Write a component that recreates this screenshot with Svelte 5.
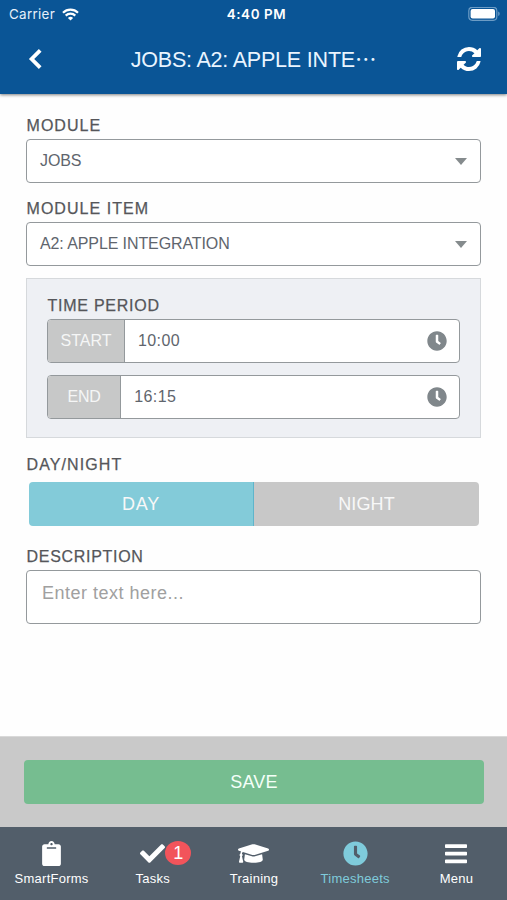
<script>
  const CLOCK =
    "M256 8C119 8 8 119 8 256s111 248 248 248 248-111 248-248S393 8 256 8zm92.49 313l-20 25a16 16 0 0 1-22.49 2.5l-67-49.72a40 40 0 0 1-15-31.23V112a16 16 0 0 1 16-16h32a16 16 0 0 1 16 16v144l58 42.5a16 16 0 0 1 2.49 22.5z";

  const tabs = [
    {
      name: "SmartForms",
      viewBox: "0 0 384 512",
      width: 19,
      height: 25,
      path:
        "M384 112v352c0 26.51-21.49 48-48 48H48c-26.51 0-48-21.49-48-48V112c0-26.51 21.49-48 48-48h80c0-35.29 28.71-64 64-64s64 28.71 64 64h80c26.51 0 48 21.49 48 48zM192 40c-13.255 0-24 10.745-24 24s10.745 24 24 24 24-10.745 24-24-10.745-24-24-24m96 114v-20a6 6 0 0 0-6-6H102a6 6 0 0 0-6 6v20a6 6 0 0 0 6 6h180a6 6 0 0 0 6-6z"
    },
    {
      name: "Tasks",
      viewBox: "0 0 512 512",
      width: 25,
      height: 25,
      badge: 1,
      path:
        "M173.898 439.404l-166.4-166.4c-9.997-9.997-9.997-26.206 0-36.204l36.203-36.204c9.997-9.998 26.207-9.998 36.204 0L192 312.69 432.095 72.596c9.997-9.997 26.207-9.997 36.204 0l36.203 36.204c9.997 9.997 9.997 26.206 0 36.204l-294.4 294.401c-9.998 9.997-26.207 9.997-36.204-.001z"
    },
    {
      name: "Training",
      viewBox: "0 0 640 512",
      width: 31,
      height: 25,
      path:
        "M622.34 153.2L343.4 67.5c-15.2-4.67-31.6-4.67-46.79 0L17.66 153.2c-23.54 7.23-23.54 38.36 0 45.59l48.63 14.94c-10.67 13.19-17.23 29.28-17.88 46.9C38.78 266.15 32 276.11 32 288c0 10.78 5.68 19.85 13.86 25.65L20.33 428.53C18.11 438.52 25.71 448 35.94 448h56.11c10.24 0 17.84-9.48 15.62-19.47L82.14 313.65C90.32 307.85 96 298.78 96 288c0-11.57-6.47-21.25-15.66-26.87.76-15.02 8.44-28.3 20.69-36.72L296.6 284.5c9.06 2.78 26.44 6.25 46.79 0l278.95-85.7c23.55-7.24 23.55-38.36 0-45.6zM352.79 315.09c-28.53 8.76-52.84 3.92-65.59 0l-145.02-44.55L128 384c0 35.35 85.96 64 192 64s192-28.65 192-64l-14.18-113.47-145.03 44.56z"
    },
    {
      name: "Timesheets",
      viewBox: "0 0 512 512",
      width: 25,
      height: 25,
      path: CLOCK
    },
    {
      name: "Menu",
      viewBox: "0 0 22 25",
      width: 22,
      height: 25,
      path:
        "M.8 3.2h20.4q.8 0 .8.8v2.2q0 .8-.8.8H.8Q0 7 0 6.2V4q0-.8.8-.8zM.8 10.8h20.4q.8 0 .8.8v2.2q0 .8-.8.8H.8q-.8 0-.8-.8v-2.2q0-.8.8-.8zM.8 18.4h20.4q.8 0 .8.8v2.2q0 .8-.8.8H.8q-.8 0-.8-.8v-2.2q0-.8.8-.8z"
    }
  ];

  const selects = [
    { label: "MODULE", value: "JOBS" },
    { label: "MODULE ITEM", value: "A2: APPLE INTEGRATION" }
  ];

  const times = [
    { label: "START", value: "10:00" },
    { label: "END", value: "16:15" }
  ];

  let activeTab = "Timesheets";
  let period = "DAY";
  let description = "";
</script>

<style>
  :global(body) {
    margin: 0;
    background: #fefefe;
  }

  .app {
    width: 507px;
    height: 900px;
    display: flex;
    flex-direction: column;
    overflow: hidden;
    font-family: "Liberation Sans", Arial, sans-serif;
    color: #55565a;
  }

  .app * {
    box-sizing: border-box;
  }

  svg {
    display: block;
    flex: none;
  }

  button {
    border: 0;
    padding: 0;
    background: none;
    font-family: inherit;
    color: inherit;
  }

  header {
    height: 94px;
    flex: none;
    background: #0a5596;
    color: #fff;
    box-shadow: 0 1px 3px rgba(0, 0, 0, 0.5);
  }

  .status {
    height: 28px;
    padding: 0 7px 0 9px;
    display: grid;
    grid-template-columns: 1fr auto 1fr;
    align-items: center;
    font-family: Inter, sans-serif;
    font-size: 13.4px;
    color: #e6f0fa;
  }

  .carrier {
    display: flex;
    align-items: center;
    gap: 7px;
    letter-spacing: 0.3px;
  }

  .clock {
    padding-left: 4px;
    font-weight: 600;
    font-size: 13.4px;
    letter-spacing: 0.6px;
    color: #fff;
  }

  .battery {
    justify-self: end;
  }

  .toolbar {
    height: 62px;
    padding: 0 26px 0 28px;
    display: grid;
    grid-template-columns: 25px 1fr 25px;
    align-items: center;
  }

  .toolbar button {
    display: flex;
  }

  .toolbar button:last-child {
    justify-content: flex-end;
  }

  h1 {
    margin: 2px 2px 0 0;
    text-align: center;
    font-size: 21.5px;
    font-weight: 400;
    line-height: 30px;
    letter-spacing: -0.2px;
    color: #e9f4ff;
    white-space: nowrap;
  }

  .dots {
    font-family: "Noto Sans CJK JP", sans-serif;
    line-height: 1;
  }

  form {
    flex: 1;
    padding: 20px 26px 0;
  }

  .label {
    height: 25px;
    padding-left: 0.5px;
    font-size: 16px;
    line-height: 24px;
    letter-spacing: 1.05px;
    -webkit-text-stroke: 0.25px #55565a;
  }

  .field {
    margin-bottom: 14px;
  }

  .select,
  .time {
    height: 44px;
    display: flex;
    align-items: center;
    border: 1.5px solid #94999c;
    border-radius: 4px;
    background: #fff;
    font-size: 16px;
    color: #60656d;
  }

  .select {
    justify-content: space-between;
    padding: 0 13px;
    letter-spacing: -0.1px;
  }

  .panel {
    margin-top: -2px;
    padding: 14px 20px 19px;
    height: 160px;
    border: 1px solid #d6d9dc;
    background: #eef0f4;
  }

  .panel .label {
    height: 26px;
    line-height: 26px;
    letter-spacing: 0.75px;
  }

  .time {
    padding-right: 12px;
    overflow: hidden;
  }

  .time + .time {
    margin-top: 12px;
  }

  .addon {
    align-self: stretch;
    display: flex;
    align-items: center;
    padding: 0 12.5px;
    border-right: 1px solid #94999c;
    background: #c7c8c8;
    color: #f5f6f6;
  }

  .time + .time .addon {
    padding: 0 19.5px;
    letter-spacing: -0.2px;
  }

  .value {
    flex: 1;
    padding-left: 13px;
    letter-spacing: 0.4px;
  }

  .label.day-night {
    margin-top: 15px;
    letter-spacing: 1.1px;
  }

  .toggle {
    height: 44px;
    margin: 4px 2px 19px 3px;
    display: grid;
    grid-template-columns: 1fr 1fr;
    border-radius: 4px;
    overflow: hidden;
  }

  .toggle button {
    background: #c8c8c8;
    color: #f8f8f8;
    font-size: 18px;
    letter-spacing: 0.1px;
  }

  .toggle .active {
    background: #83cbd9;
    border-right: 1px solid #5fb5cb;
    letter-spacing: 0.8px;
  }

  .label.description {
    letter-spacing: 0.7px;
  }

  textarea {
    display: block;
    width: 100%;
    height: 54px;
    padding: 10px 15px;
    border: 1.5px solid #94999c;
    border-radius: 4px;
    background: #fff;
    font: 18px/24px "Liberation Sans", Arial, sans-serif;
    letter-spacing: 0.5px;
    resize: none;
    outline: 0;
  }

  textarea::placeholder {
    color: #a0a0a0;
  }

  .actions {
    height: 91px;
    flex: none;
    padding: 23px 23px 0 24px;
    background: #c9c9c9;
    border-top: 1px solid #d9d9d9;
  }

  .save {
    width: 100%;
    height: 44px;
    border-radius: 4px;
    background: #76bd90;
    color: #f4fff8;
    font-size: 18px;
    letter-spacing: 0.2px;
  }

  nav {
    height: 73px;
    flex: none;
    padding-left: 1px;
    display: grid;
    grid-template-columns: repeat(5, 1fr);
    background: #525e6a;
    color: #fff;
  }

  .tab {
    display: flex;
    flex-direction: column;
    align-items: center;
    padding-top: 14px;
    font-size: 13px;
    line-height: 18px;
    letter-spacing: 0.25px;
  }

  .tab svg {
    margin-bottom: 4px;
  }

  .tab.active {
    color: #7fcbdb;
  }

  .icon {
    position: relative;
  }

  .badge {
    position: absolute;
    left: 25px;
    top: 0;
    width: 26px;
    height: 24px;
    border-radius: 50%;
    background: #f2545b;
    color: #fff;
    font-size: 18px;
    line-height: 24px;
    text-align: center;
    letter-spacing: 0;
  }
</style>

<div class="app">
  <header>
    <div class="status">
      <div class="carrier">
        Carrier
        <svg width="17" height="13" viewBox="0 0 17 13" fill="none" stroke="#fff" stroke-width="2.2">
          <path d="M1 4.7a10.6 10.6 0 0 1 15 0" />
          <path d="M3.7 7.6a6.8 6.8 0 0 1 9.6 0" />
          <path d="M8.5 12.6L5.9 10a3.7 3.7 0 0 1 5.2 0z" fill="#fff" stroke="none" />
        </svg>
      </div>
      <div class="clock">4:40 PM</div>
      <svg class="battery" width="32" height="15" viewBox="0 0 32 15">
        <rect x=".8" y=".3" width="28" height="13" rx="3.5" fill="none" stroke="#6c9cc5" stroke-width="1.2" />
        <rect x="2.6" y="2.1" width="24.4" height="9.4" rx="2" fill="#fff" />
        <path d="M30.2 4.500v4.6q1.5-.6 1.5-2.3t-1.5-2.3z" fill="#6c9cc5" />
      </svg>
    </div>
    <div class="toolbar">
      <button aria-label="Back">
        <svg width="14" height="20" viewBox="0 0 14 20" fill="none" stroke="#fff" stroke-width="3.8">
          <path d="M12.2 1.4L3.6 10l8.600 8.600" />
        </svg>
      </button>
      <h1>JOBS: A2: APPLE INTE<span class="dots" lang="ja">…</span></h1>
      <button aria-label="Refresh">
        <svg width="24" height="24" viewBox="0 128 1536 1536" fill="#fff">
          <path
            d="M1511 1056q0 5-1 7-64 268-268 434.5t-478 166.5q-146 0-282.5-55t-243.5-157l-129 129q-19 19-45 19t-45-19-19-45v-448q0-26 19-45t45-19h448q26 0 45 19t19 45-19 45l-137 137q71 66 161 102t187 36q134 0 250-65t186-179q11-17 53-117 8-23 30-23h192q13 0 22.5 9.5t9.5 22.5zm25-800v448q0 26-19 45t-45 19h-448q-26 0-45-19t-19-45 19-45l138-138q-148-137-349-137-134 0-250 65t-186 179q-11 17-53 117-8 23-30 23h-199q-13 0-22.5-9.5t-9.5-22.5v-7q65-268 270-434.5t480-166.5q146 0 284 55.5t245 156.5l130-129q19-19 45-19t45 19 19 45z" />
        </svg>
      </button>
    </div>
  </header>

  <form>
    {#each selects as select}
      <div class="field">
        <div class="label">{select.label}</div>
        <div class="select">
          {select.value}
          <svg width="12" height="7" viewBox="0 0 12 7" fill="#858b8d">
            <path d="M0 0h12L6 7z" />
          </svg>
        </div>
      </div>
    {/each}

    <div class="panel">
      <div class="label">TIME PERIOD</div>
      {#each times as time}
        <div class="time">
          <span class="addon">{time.label}</span>
          <span class="value">{time.value}</span>
          <svg width="20" height="20" viewBox="0 0 512 512" fill="#80878b">
            <path d={CLOCK} />
          </svg>
        </div>
      {/each}
    </div>

    <div class="label day-night">DAY/NIGHT</div>
    <div class="toggle">
      {#each ["DAY", "NIGHT"] as option}
        <button
          type="button"
          class:active={period === option}
          on:click={() => (period = option)}>
          {option}
        </button>
      {/each}
    </div>

    <div class="label description">DESCRIPTION</div>
    <textarea placeholder="Enter text here..." bind:value={description}></textarea>
  </form>

  <div class="actions">
    <button class="save">SAVE</button>
  </div>

  <nav>
    {#each tabs as tab}
      <button
        class="tab"
        class:active={activeTab === tab.name}
        on:click={() => (activeTab = tab.name)}>
        <div class="icon">
          <svg
            width={tab.width}
            height={tab.height}
            viewBox={tab.viewBox}
            fill="currentColor">
            <path d={tab.path} />
          </svg>
          {#if tab.badge}
            <span class="badge">{tab.badge}</span>
          {/if}
        </div>
        {tab.name}
      </button>
    {/each}
  </nav>
</div>
